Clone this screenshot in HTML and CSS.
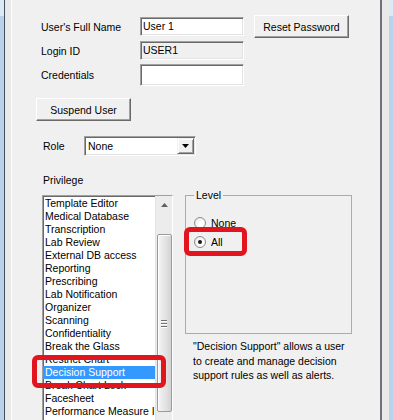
FILE: index.html
```html
<!DOCTYPE html>
<html lang="en">
<head>
  <meta charset="UTF-8">
  <title>User Properties</title>
  <link rel="stylesheet" href="styles.css">
</head>
<body>

  <div class="window">
    <div class="panel">

      <div class="row row-name">
        <span class="label">User's Full Name</span>
        <div class="field">User 1</div>
        <div class="btn btn-reset">Reset Password</div>
      </div>

      <div class="row row-login">
        <span class="label">Login ID</span>
        <div class="field field-disabled">USER1</div>
      </div>

      <div class="row row-cred">
        <span class="label">Credentials</span>
        <div class="field field-tall"></div>
      </div>

      <div class="btn btn-suspend">Suspend User</div>

      <div class="row row-role">
        <span class="label label-role">Role</span>
        <div class="combo">
          <span class="combo-text">None</span>
          <span class="combo-drop">
            <svg width="7" height="4" viewBox="0 0 7 4"><path d="M0 0h7L3.5 4z" fill="#000"/></svg>
          </span>
        </div>
      </div>

      <div class="privilege">Privilege</div>

      <div class="content">
        <div class="listbox">
          <div class="items" id="items"></div>
          <div class="scrollbar">
            <div class="scroll-up">
              <svg width="7" height="4" viewBox="0 0 7 4"><path d="M0 4h7L3.5 0z" fill="#606060"/></svg>
            </div>
            <div class="thumb">
              <span class="grip"></span>
              <span class="grip"></span>
              <span class="grip"></span>
            </div>
          </div>
        </div>

        <div class="side">
          <div class="group">
            <div class="legend">Level</div>
            <div class="radio-row radio-first">
              <span class="radio"></span>
              <span>None</span>
            </div>
            <div class="radio-row">
              <span class="radio checked"></span>
              <span>All</span>
            </div>
          </div>
          <div class="desc">
            "Decision Support" allows a user<br>
            to create and manage decision<br>
            support rules as well as alerts.
          </div>
        </div>
      </div>

    </div>
  </div>

  <div class="mark mark-list"></div>
  <div class="mark mark-level"></div>

  <script>
    const privileges = [
      "Template Editor", "Medical Database", "Transcription", "Lab Review",
      "External DB access", "Reporting", "Prescribing", "Lab Notification",
      "Organizer", "Scanning", "Confidentiality", "Break the Glass",
      "Restrict Chart", "Decision Support", "Break Chart Lock", "Facesheet",
      "Performance Measure I"
    ];
    const selected = "Decision Support";

    const list = document.getElementById("items");
    privileges.forEach(p => {
      const item = document.createElement("div");
      item.className = "item" + (p === selected ? " selected" : "");
      item.textContent = p;
      list.appendChild(item);
    });
  </script>

</body>
</html>
```

FILE: styles.css
```css
* {
  box-sizing: border-box;
}

body {
  margin: 0;
  height: 420px;
  overflow: hidden;
  position: relative;
  font-family: "Liberation Sans", Arial, sans-serif;
  font-size: 10.5px;
  color: #000;
  background: linear-gradient(#dce9f6 0, #dce9f6 16px, #b9d1ea 16px);
}

.window {
  margin-left: 4px;
  width: 385px;
  height: 420px;
  border-left: 1px solid #434e5b;
  padding: 0 7px 0 6px;
  background: #e9e9e9;
}

.panel {
  height: 100%;
  border-left: 1px solid #fff;
  border-right: 2px solid #6f7279;
  background: #f0f0f0;
  padding: 15px 0 0 29px;
}

.row {
  display: flex;
  align-items: center;
}

.row-name {
  height: 23px;
}

.row-login {
  height: 19px;
  margin-top: 3px;
}

.row-cred {
  height: 22px;
  margin-top: 4px;
}

.label {
  width: 99px;
}

.field {
  width: 104px;
  height: 19px;
  padding-left: 2px;
  line-height: 16px;
  background: #fff;
  border: 1px solid;
  border-color: #a0a0a0 #fff #fff #a0a0a0;
  box-shadow: inset 1px 1px #696969, inset -1px -1px #e3e3e3;
}

.field-disabled {
  background: #f0f0f0;
}

.field-tall {
  height: 22px;
}

.btn {
  width: 95px;
  height: 23px;
  display: flex;
  align-items: center;
  justify-content: center;
  background: #f0f0f0;
  border: 1px solid;
  border-color: #fff #696969 #696969 #fff;
  box-shadow: inset -1px -1px #a0a0a0;
}

.btn-reset {
  margin-left: 10px;
}

.btn-suspend {
  margin: 12px 0 0 -5px;
}

.row-role {
  height: 20px;
  margin-top: 15px;
}

.label-role {
  width: 41px;
  margin-left: 2px;
}

.combo {
  width: 112px;
  height: 20px;
  display: flex;
  align-items: stretch;
  background: #fff;
  border: 1px solid;
  border-color: #a0a0a0 #fff #fff #a0a0a0;
  box-shadow: inset 1px 1px #696969, inset -1px -1px #e3e3e3;
  padding: 1px;
}

.combo-text {
  flex: 1;
  padding-left: 2px;
  line-height: 16px;
}

.combo-drop {
  width: 17px;
  display: flex;
  align-items: center;
  justify-content: center;
  background: #f0f0f0;
  border: 1px solid;
  border-color: #f0f0f0 #696969 #696969 #f0f0f0;
  box-shadow: inset 1px 1px #fff, inset -1px -1px #a0a0a0;
}

.privilege {
  height: 13px;
  line-height: 13px;
  margin: 18px 0 0 2px;
}

.content {
  display: flex;
  align-items: flex-start;
  margin: 8px 0 0 1px;
}

.listbox {
  width: 131px;
  height: 240px;
  display: flex;
  background: #fff;
  border: 1px solid;
  border-color: #a0a0a0 #fff #fff #a0a0a0;
  box-shadow: inset 1px 1px #696969;
}

.items {
  width: 112px;
  overflow: hidden;
  padding-top: 1px;
}

.item {
  height: 13px;
  line-height: 13px;
  padding-left: 2px;
  white-space: nowrap;
}

.selected {
  background: #3399ff;
  color: #fff;
}

.scrollbar {
  width: 17px;
  background: #ececec;
  border-left: 1px solid #e3e3e3;
  display: flex;
  flex-direction: column;
  align-items: center;
}

.scroll-up {
  height: 17px;
  width: 100%;
  display: flex;
  align-items: center;
  justify-content: center;
}

.thumb {
  width: 15px;
  height: 178px;
  margin-top: 21px;
  border: 1px solid #9a9a9a;
  border-radius: 2px;
  background: linear-gradient(90deg, #f5f5f5, #e2e2e2 60%, #d3d3d3);
  box-shadow: inset 1px 1px #fff;
  display: flex;
  flex-direction: column;
  align-items: center;
  justify-content: center;
  gap: 2px;
}

.grip {
  width: 6px;
  height: 1px;
  background: #707070;
  box-shadow: 0 1px #fff;
}

.side {
  margin-left: 12px;
}

.group {
  width: 167px;
  height: 139px;
  border: 1px solid #acacac;
}

.legend {
  width: max-content;
  margin: -7px 0 0 8px;
  padding: 0 2px;
  line-height: 13px;
  background: #f0f0f0;
}

.radio-row {
  display: flex;
  align-items: center;
  height: 19px;
  padding-left: 8px;
}

.radio-first {
  margin-top: 11px;
}

.radio {
  width: 12px;
  height: 12px;
  margin-right: 5px;
  border-radius: 50%;
  border: 1px solid #8d8d8d;
  background: radial-gradient(circle at 60% 60%, #fff 30%, #dcdcdc);
  display: flex;
  align-items: center;
  justify-content: center;
}

.checked::after {
  content: "";
  width: 4px;
  height: 4px;
  border-radius: 50%;
  background: #1a1a1a;
}

.desc {
  margin: 5px 0 0 8px;
  line-height: 14.5px;
}

.mark {
  position: absolute;
  border: 5px solid #e2141d;
  border-radius: 6px;
}

.mark-list {
  left: 32px;
  top: 355px;
  width: 134px;
  height: 33px;
}

.mark-level {
  left: 184px;
  top: 227px;
  width: 63px;
  height: 29px;
}
```
